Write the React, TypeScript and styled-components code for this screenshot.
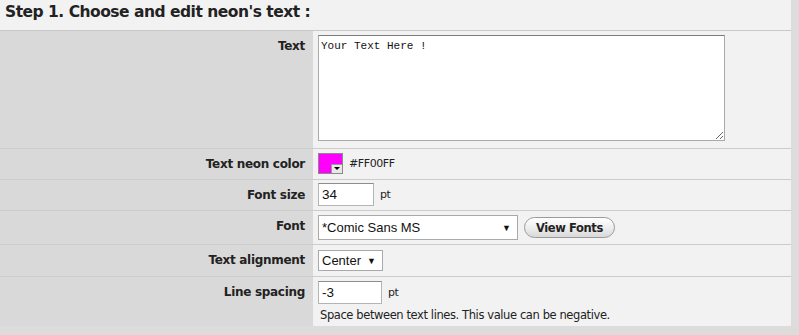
import React from "react";
import styled, { createGlobalStyle } from "styled-components";

const GlobalStyle = createGlobalStyle`
  html, body {
    margin: 0;
    padding: 0;
    background: #dcdcdc;
  }
  body {
    font-family: "DejaVu Sans", Verdana, sans-serif;
    color: #222;
  }
`;

const Panel = styled.div`
  width: 791px;
  height: 326px;
  background: #f2f2f2;
  overflow: hidden;
`;

const Header = styled.div`
  height: 31px;
  border-bottom: 1px solid #c8c8c8;
  box-sizing: border-box;
  padding: 3px 0 0 5px;
  font-family: "DejaVu Sans", Verdana, sans-serif;
  font-weight: bold;
  font-size: 15.5px;
  letter-spacing: -0.5px;
  color: #222;
`;

const Row = styled.div<{ $h: number; $last?: boolean }>`
  display: grid;
  grid-template-columns: 313px 1fr;
  box-sizing: border-box;
  height: ${(p) => p.$h}px;
  border-bottom: ${(p) => (p.$last ? "none" : "1px solid #cccccc")};
`;

const Label = styled.div`
  background: #d9d9d9;
  text-align: right;
  padding: 7px 8px 0 0;
  font-family: "DejaVu Sans", Verdana, sans-serif;
  font-weight: bold;
  font-size: 12px;
  line-height: 16px;
  letter-spacing: -0.3px;
  color: #222;
`;

const Value = styled.div<{ $pt: number }>`
  padding: ${(p) => p.$pt}px 0 0 5px;
  display: flex;
  flex-direction: column;
  align-items: flex-start;
`;

const Line = styled.div`
  display: flex;
  align-items: center;
  gap: 6px;
`;

const TextArea = styled.textarea`
  width: 407px;
  height: 106px;
  box-sizing: border-box;
  margin: 0;
  padding: 3px 2px;
  border: 1px solid #a9a9a9;
  border-top-color: #7a7a7a;
  background: #fff;
  font-family: "Liberation Mono", "Courier New", monospace;
  font-size: 11px;
  line-height: 14px;
  color: #111;
  outline: none;
`;

const Swatch = styled.div`
  position: relative;
  width: 25px;
  height: 21px;
  box-sizing: border-box;
  border: 1px solid #8a8a8a;
  background: #ff00ff;
`;

const SwatchArrow = styled.span`
  position: absolute;
  right: 0;
  bottom: 0;
  width: 10px;
  height: 8px;
  background: #e8e8e8;
  border-left: 1px solid #999;
  border-top: 1px solid #999;
  &::after {
    content: "";
    position: absolute;
    left: 2px;
    top: 2px;
    border-left: 3px solid transparent;
    border-right: 3px solid transparent;
    border-top: 3px solid #000;
  }
`;

const SmallText = styled.span`
  font-family: "DejaVu Sans", Verdana, sans-serif;
  font-size: 11px;
  letter-spacing: -0.4px;
  color: #222;
`;

const Input = styled.div<{ $w: number }>`
  width: ${(p) => p.$w}px;
  height: 23px;
  box-sizing: border-box;
  border: 1px solid #b4b4b4;
  border-top-color: #8d8d8d;
  background: #fff;
  padding: 2px 3px;
  font-family: "Liberation Sans", Arial, sans-serif;
  font-size: 13.5px;
  line-height: 17px;
  color: #111;
`;

const Select = styled.div<{ $w: number; $hh: number }>`
  width: ${(p) => p.$w}px;
  height: ${(p) => p.$hh}px;
  box-sizing: border-box;
  border: 1px solid #a9a9a9;
  background: #fff;
  display: flex;
  align-items: center;
  justify-content: space-between;
  padding: 0 6px 0 3px;
  font-family: "Liberation Sans", Arial, sans-serif;
  font-size: 13px;
  color: #111;
`;

const Caret = styled.span`
  font-size: 9px;
  color: #111;
`;

const Button = styled.div`
  height: 21px;
  box-sizing: border-box;
  padding: 0 11px;
  border: 1px solid #9a9a9a;
  border-radius: 11px;
  background: linear-gradient(#ffffff, #ececec 55%, #d9d9d9);
  display: flex;
  align-items: center;
  font-family: "DejaVu Sans", Verdana, sans-serif;
  font-weight: bold;
  font-size: 11.5px;
  letter-spacing: -0.4px;
  color: #222;
`;

const Hint = styled.div`
  margin: 4px 0 0 2px;
  font-family: "DejaVu Sans", Verdana, sans-serif;
  font-size: 11.5px;
  letter-spacing: -0.4px;
  color: #222;
`;

export default function App() {
  return (
    <>
      <GlobalStyle />
      <Panel>
        <Header>Step 1. Choose and edit neon's text :</Header>
        <Row $h={118}>
          <Label>Text</Label>
          <Value $pt={4}>
            <TextArea defaultValue="Your Text Here !" />
          </Value>
        </Row>
        <Row $h={31}>
          <Label>Text neon color</Label>
          <Value $pt={4}>
            <Line>
              <Swatch>
                <SwatchArrow />
              </Swatch>
              <SmallText>#FF00FF</SmallText>
            </Line>
          </Value>
        </Row>
        <Row $h={31}>
          <Label>Font size</Label>
          <Value $pt={3}>
            <Line>
              <Input $w={56}>34</Input>
              <SmallText>pt</SmallText>
            </Line>
          </Value>
        </Row>
        <Row $h={34}>
          <Label>Font</Label>
          <Value $pt={4}>
            <Line>
              <Select $w={200} $hh={25}>
                <span>*Comic Sans MS</span>
                <Caret>▼</Caret>
              </Select>
              <Button>View Fonts</Button>
            </Line>
          </Value>
        </Row>
        <Row $h={32}>
          <Label>Text alignment</Label>
          <Value $pt={5}>
            <Select $w={65} $hh={21}>
              <span>Center</span>
              <Caret>▼</Caret>
            </Select>
          </Value>
        </Row>
        <Row $h={49} $last>
          <Label>Line spacing</Label>
          <Value $pt={4}>
            <Line>
              <Input $w={64}>-3</Input>
              <SmallText>pt</SmallText>
            </Line>
            <Hint>Space between text lines. This value can be negative.</Hint>
          </Value>
        </Row>
      </Panel>
    </>
  );
}
